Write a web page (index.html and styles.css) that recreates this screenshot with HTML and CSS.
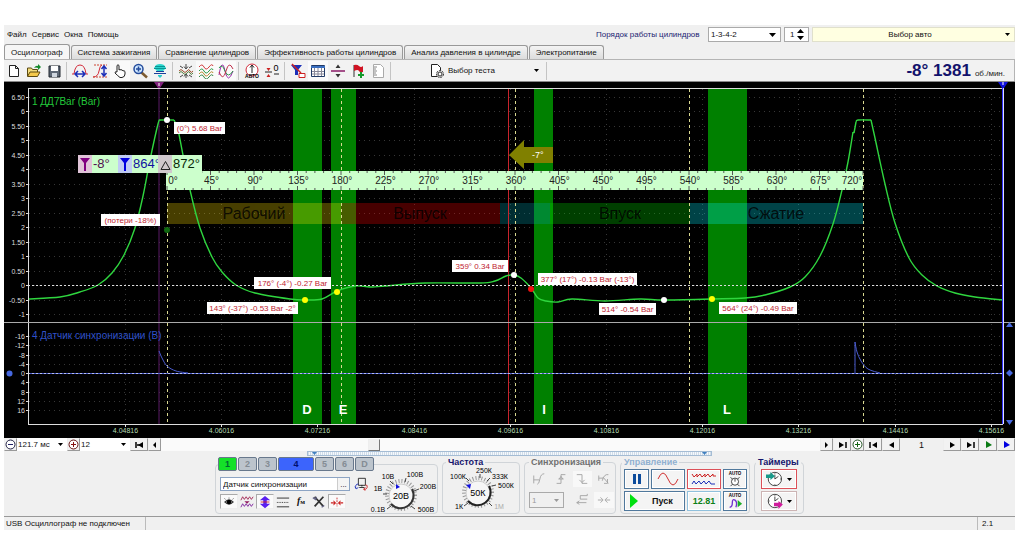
FILE: index.html
```html
<!DOCTYPE html>
<html lang="ru">
<head>
<meta charset="utf-8">
<title>USB Осциллограф</title>
<link rel="stylesheet" href="styles.css">
</head>
<body>
<div class="app">
  <header class="menubar">
    <nav class="menu">
      <button>Файл</button><button>Сервис</button><button>Окна</button><button>Помощь</button>
    </nav>
    <div class="order">
      <label for="order">Порядок работы цилиндров</label>
      <span class="combo order-combo"><select id="order"><option>1-3-4-2</option></select><svg class="caret" viewBox="0 0 7 4"><path d="M0 0h7L3.500 4z"/></svg></span>
      <span class="combo spin"><input type="text" inputmode="numeric" value="1" aria-label="Цилиндр"><svg class="updown" viewBox="0 0 7 11"><path d="M0 4h7L3.500 0zM0 7h7L3.500 11z"/></svg></span>
      <span class="combo car"><select aria-label="Авто"><option>Выбор авто</option></select><svg class="caret small" viewBox="0 0 7 4"><path d="M0 0h7L3.500 4z"/></svg></span>
    </div>
  </header>

  <div class="tabs" role="tablist">
    <button class="tab active" role="tab">Осциллограф</button>
    <button class="tab" role="tab">Система зажигания</button>
    <button class="tab" role="tab">Сравнение цилиндров</button>
    <button class="tab" role="tab">Эффективность работы цилиндров</button>
    <button class="tab" role="tab">Анализ давления в цилиндре</button>
    <button class="tab" role="tab">Электропитание</button>
  </div>

  <div class="toolbar">
    <button class="tool" aria-label="Новый"><svg viewBox="0 0 16 16"><path d="M3.500 2.500h6l3 3v8h-9zM9.500 2.500v3h3" fill="#fff" stroke="#222"/></svg></button>
    <button class="tool" aria-label="Открыть"><svg viewBox="0 0 16 16"><path d="M1.500 13V5h4l1 1.500h5V9" fill="#f3dc7c" stroke="#5c4a10"/><path d="M1.500 13.500L4 9h10l-2.500 4.500z" fill="#f5c94b" stroke="#5c4a10"/><path d="M8 5q2-3 4-2V1l3 3-3 3V5q-2-1-4 0z" fill="#168a2c"/></svg></button>
    <button class="tool" aria-label="Сохранить"><svg viewBox="0 0 16 16"><path d="M3 3h11v11H3z" fill="#5e6876" stroke="#20262e"/><path d="M5 3h7v5H5z" fill="#fff"/><path d="M6 10h5v4H6z" fill="#cfd6df"/></svg></button>
    <i class="sep"></i>
    <button class="tool" aria-label="Период"><svg viewBox="0 0 16 16"><path d="M0 11h2Q3 2 8 2t6 9h2" fill="none" stroke="#d22a3a"/><path d="M3 11h10M6 8l-3 3 3 3M10 8l3 3-3 3" fill="none" stroke="#1b2fb8" stroke-width="1.500"/></svg></button>
    <button class="tool" aria-label="Амплитуда"><svg viewBox="0 0 16 16"><path d="M1 14Q6 14 7 8t3-6" fill="none" stroke="#d22a3a"/><path d="M2 2h13M1 14h14" stroke="#c43" stroke-dasharray="2 1"/><path d="M12 3v10M9.500 6L12 3l2.500 3M9.500 10l2.500 3 2.500-3" fill="none" stroke="#1b2fb8" stroke-width="1.500"/></svg></button>
    <button class="tool on" aria-label="Рука"><svg viewBox="0 0 16 16"><path d="M5 9V2.500q1-1.500 2 0V7q1-1 2 0 1-1 2 1 1-1 2 .5V11q0 3-3 3.500H8Q6 13 3 10q0-2 2-1z" fill="#fff" stroke="#222"/></svg></button>
    <button class="tool" aria-label="Лупа"><svg viewBox="0 0 16 16"><path d="M9.500 9.500L15 14.500" stroke="#7c5a30" stroke-width="2.500"/><circle cx="6.500" cy="6" r="4.500" fill="#cde6ff" stroke="#234a9a" stroke-width="1.500"/><path d="M4 6h5M6.500 3.500v5" stroke="#234a9a" stroke-width="1.500"/></svg></button>
    <button class="tool" aria-label="Фильтр"><svg viewBox="0 0 16 16"><path d="M4 2Q8 0 12 2l2 3-3 3H5L2 5z" fill="#2cd4cc"/><path d="M3 3.500h10M2 5.500h12" stroke="#089494"/><path d="M2 10.500h12M4 8.500h8" stroke="#1b3f9a"/><path d="M6 12h4v1l-2 2-2-2z" fill="#2cc8c8"/></svg></button>
    <i class="sep"></i>
    <button class="tool" aria-label="Сжать"><svg viewBox="0 0 16 16" fill="none"><path d="M1 8q2-3 4 0t4 0 3 0 3 0" stroke="#a05030"/><path d="M1 10q2-3 4 0t4 0 3 0 3 0" stroke="#508040"/><path d="M8 1v4M6 3.500L8 6l2-2.500M8 15v-3M6 13.500L8 11l2 2.500M2 3l3 2M14 3l-3 2M2 14l3-2M14 14l-3-2" stroke="#444"/></svg></button>
    <button class="tool on" aria-label="Раздельно"><svg viewBox="0 0 16 16" fill="none"><path d="M1 4q3-4 5 0t5 0 4-1" stroke="#d03b3b"/><path d="M1 8q3-4 5 0t5 0 4-1" stroke="#2a9a48"/><path d="M1 11q3-4 5 0t5 0 4-1" stroke="#b98932"/><path d="M1 14q3-4 5 0t5 0 4-1" stroke="#348848"/></svg></button>
    <button class="tool on" aria-label="Вместе"><svg viewBox="0 0 16 16" fill="none"><path d="M1 12Q4-6 7 8t8 0" stroke="#9b2bab"/><path d="M1 5q3-5 6 3t8 0" stroke="#2a9a48"/><path d="M1 9q4 10 7-1t7-2" stroke="#c0304c"/></svg></button>
    <i class="sep"></i>
    <button class="tool" aria-label="Авто"><svg viewBox="0 0 16 16"><circle cx="8" cy="7" r="6" fill="#fff" stroke="#d22a3a"/><path d="M8 2v8M6 4.500L8 2l2 2.500" fill="none" stroke="#222"/><text x="8" y="15" class="tiny">АВТО</text></svg></button>
    <button class="tool" aria-label="Ноль"><svg viewBox="0 0 16 16"><path d="M1 9h7M10 11h5" stroke="#222"/><path d="M2.500 5h4l-2 3zM2.500 14h4l-2-3z" fill="#c22"/><text x="12" y="8" class="zero">0</text></svg></button>
    <i class="sep"></i>
    <button class="tool" aria-label="Маркер"><svg viewBox="0 0 16 16"><path d="M1 2h11L8 7v5H5V7z" fill="#1b2fb8"/><path d="M2 1l9 9" stroke="#c22" stroke-width="1.500"/><path d="M9 10.500h6v4H9z" fill="#fff" stroke="#c22"/></svg></button>
    <button class="tool on" aria-label="Таблица"><svg viewBox="0 0 16 16"><path d="M1.500 2.500h13v11h-13z" fill="#fff" stroke="#223a66"/><path d="M1 4h14" stroke="#3a6fc0" stroke-width="2"/><path d="M4.500 5v8M8 5v8M11.500 5v8M2 8.500h12M2 11h12" stroke="#889"/></svg></button>
    <button class="tool" aria-label="Линия"><svg viewBox="0 0 16 16"><path d="M1 8h14" stroke="#8a1a66" stroke-width="1.500"/><path d="M5.500 5h5L8 1.500zM5.500 11h5L8 14.500z" fill="#333"/></svg></button>
    <button class="tool" aria-label="Флаг"><svg viewBox="0 0 16 16"><path d="M4 2v12" stroke="#333"/><path d="M4 2q3-1 5 1t4 0v6q-3 1-4-1t-5 0z" fill="#d01424"/><path d="M11 9v6M8 12h6" stroke="#159a2c" stroke-width="2"/></svg></button>
    <button class="tool" aria-label="Отчет"><svg viewBox="0 0 16 16"><path d="M3.500 1.500h7l3 3v10h-10z" fill="#fff" stroke="#aaa"/><path d="M4 4h3M4 6h2M4 8h3M4 10h2M4 12h3" stroke="#888"/></svg></button>
    <i class="sep"></i>
    <button class="test-select">
      <svg class="doc" viewBox="0 0 16 16"><path d="M2.500 1.500h6l3 3v9h-9z" fill="#fff" stroke="#222"/><circle cx="11" cy="11" r="3.500" fill="#ddd" stroke="#333" stroke-dasharray="2 1"/><circle cx="11" cy="11" r="2" fill="#fff" stroke="#333"/></svg>
      <span>Выбор теста</span>
      <svg class="caret small" viewBox="0 0 7 4"><path d="M0 0h7L3.500 4z"/></svg>
    </button>
    <i class="sep"></i>
    <output class="rpm"><b>-8° 1381</b><span>об./мин.</span></output>
  </div>

  <svg class="plot" viewBox="4 81 1011 357" role="img" aria-label="Осциллограмма">
    <rect x="4" y="81" width="1011" height="357" fill="#000"/>
    <path d="M4 81.500h1011" stroke="#888"/>
    <g id="grid"></g>
    <g fill="#008000">
      <rect x="293" y="89" width="29" height="335"/><rect x="331" y="89" width="25" height="335"/>
      <rect x="534" y="89" width="19" height="335"/><rect x="708" y="89" width="39" height="335"/>
    </g>
    <g class="phase-bars">
      <rect x="167" y="203" width="174" height="21" fill="#ffe000"/>
      <rect x="341" y="203" width="159" height="21" fill="#ff0000"/>
      <rect x="500" y="203" width="50" height="21" fill="#00a0b0"/>
      <rect x="550" y="203" width="140" height="21" fill="#00e000"/>
      <rect x="690" y="203" width="173" height="21" fill="#00f0ff"/>
    </g>
    <g class="phase">
      <text x="254" y="219">Рабочий</text><text x="420" y="219">Выпуск</text>
      <text x="620" y="219">Впуск</text><text x="776" y="219">Сжатие</text>
    </g>
    <g stroke="#d8d890" stroke-dasharray="3 3">
      <path d="M167.500 89V424"/><path d="M341.500 89V424"/><path d="M515.500 89V424"/><path d="M689.500 89V424"/><path d="M863.500 89V424"/>
    </g>
    <path d="M508.500 89V424" stroke="#c8242c"/>
    <path d="M159 89V424" stroke="#5a1a66"/>
    <g id="traces"></g>
    <path d="M28 285.500H1003" stroke="#ddd" stroke-dasharray="2 2"/><path d="M28 373.500H1003" stroke="#b8c0f0" stroke-dasharray="2 2"/>
    <path d="M28.500 89V424" stroke="#ddd"/><path d="M28 88.500H1003M28 424.500H1003" stroke="#ddd"/><path d="M4 322.500H1015" stroke="#aaa"/>
    <path d="M1002.500 88V424" stroke="#3030ff"/><path d="M1003.500 88V424" stroke="#ddf"/>
    <g id="axes"></g>
    <text x="32" y="105" class="channel" fill="#22c83a">1 ДД7Bar (Bar)</text>
    <text x="32" y="339" class="channel" fill="#2f50c8">4 Датчик синхронизации (В)</text>
    <path d="M509 155l15-15v7h29v16h-29v6z" fill="#808000"/>
    <text x="532" y="158" class="shift">-7°</text>
    <g class="band"><text x="307" y="414">D</text><text x="343" y="414">E</text><text x="544" y="414">I</text><text x="727" y="414">L</text></g>
    <rect x="166" y="171" width="697" height="19" fill="#ccffcc"/>
    <g id="ruler"></g>
    <g class="cursors">
      <rect x="78" y="155" width="124" height="18" fill="#ccffcc"/>
      <rect x="78" y="155" width="14" height="18" fill="#e0c4d8"/><rect x="118" y="155" width="14" height="18" fill="#c0ccf4"/>
      <path d="M80 158h10l-4 5v8h-2v-8z" fill="#800080"/><path d="M120 158h10l-4 5v8h-2v-8z" fill="#0000e0"/>
      <text x="93" y="168" fill="#501050">-8°</text><text x="133" y="168" fill="#1010a0">864°</text><text x="173" y="168" fill="#082808">872°</text>
      <rect x="158" y="155" width="14" height="18" fill="#d0c8cc"/><path d="M161 169.500l4.500-8 4.500 8z" fill="none" stroke="#222"/>
    </g>
    <g id="notes"></g>
    <path d="M154 82h10l-4 6h-2z" fill="#80207c"/><path d="M159 83v3" stroke="#fff"/>
    <path d="M998 82h10l-4 6h-2z" fill="#1010e0"/><path d="M1003 82v3" stroke="#fff"/>
    <g fill="#4668e0"><circle cx="9.500" cy="373.500" r="3"/><path d="M1006 327h7l-3.500-5zM1006 420h7l-3.500 5zM1006 373l3.500-3.500 3.500 3.500-3.500 3.500z"/></g>
  </svg>

  <div class="navbar">
    <button class="nav" aria-label="Уменьшить"><svg viewBox="0 0 11 11"><circle cx="5.500" cy="5.500" r="4.500" fill="#fff" stroke="#224"/><path d="M3 5.500h5" stroke="#226"/></svg></button>
    <span class="pick"><select aria-label="Развертка"><option>121.7 мс</option></select><svg class="caret small" viewBox="0 0 7 4"><path d="M0 0h7L3.500 4z"/></svg></span>
    <button class="nav" aria-label="Увеличить"><svg viewBox="0 0 11 11"><circle cx="5.500" cy="5.500" r="4.500" fill="#fff" stroke="#611"/><path d="M3 5.500h5M5.500 3v5" stroke="#811"/></svg></button>
    <span class="pick"><select aria-label="Делений"><option>12</option></select><svg class="caret small" viewBox="0 0 7 4"><path d="M0 0h7L3.500 4z"/></svg></span>
    <button class="nav wide" aria-label="В начало"><svg viewBox="0 0 11 11"><path d="M2 3v6M3 6h3" stroke="#000" stroke-width="1.500"/><path d="M9 3v6L4 6z"/></svg></button>
    <button class="nav" aria-label="Назад"><svg viewBox="0 0 11 11"><path d="M7 3v6L4 6z"/></svg></button>
    <input class="scroll" type="range" min="0" max="100" value="32" aria-label="Прокрутка">
    <button class="nav" aria-label="Вперед"><svg viewBox="0 0 11 11"><path d="M4 3v6l3-3z"/></svg></button>
    <button class="nav wide" aria-label="В конец"><svg viewBox="0 0 11 11"><path d="M9 3v6" stroke="#000" stroke-width="1.500"/><path d="M2 3v6l5-3z"/></svg></button>
    <button class="nav" aria-label="Добавить кадр"><svg viewBox="0 0 11 11"><circle cx="5.500" cy="5.500" r="4.500" fill="#fff" stroke="#252"/><path d="M3 5.500h5M5.500 3v5" stroke="#161"/></svg></button>
    <button class="nav wide" aria-label="Первый кадр"><svg viewBox="0 0 11 11"><path d="M2 3v6" stroke="#000" stroke-width="1.500"/><path d="M9 3v6L4 6z"/></svg></button>
    <button class="nav wide" aria-label="Предыдущий кадр"><svg viewBox="0 0 11 11"><path d="M8 3v6L3 6z"/></svg></button>
    <output class="frame">1</output>
    <button class="nav wide" aria-label="Следующий кадр"><svg viewBox="0 0 11 11"><path d="M3 3v6l5-3z"/></svg></button>
    <button class="nav wide" aria-label="Последний кадр"><svg viewBox="0 0 11 11"><path d="M9 3v6" stroke="#000" stroke-width="1.500"/><path d="M2 3v6l5-3z"/></svg></button>
    <button class="nav wide" aria-label="Воспроизвести"><svg viewBox="0 0 11 11"><path d="M3 2v7l6-3z" fill="#0a7a14"/></svg></button>
    <button class="nav wide" aria-label="Воспроизвести все"><svg viewBox="0 0 11 11"><path d="M3 2v7l6-3z" fill="#0000e0"/></svg></button>
  </div>

  <div class="splitter"><i><svg viewBox="0 0 7 4"><path d="M1 0h5L3.500 3z"/></svg><svg viewBox="0 0 7 4"><path d="M1 0h5L3.500 3z"/></svg></i></div>

  <div class="panels">
    <fieldset class="group channels">
      <legend class="chan-tabs"><button class="chan green">1</button><button class="chan">2</button><button class="chan">3</button><button class="chan blue">4</button><button class="chan">5</button><button class="chan">6</button><button class="chan">D</button></legend>
      <div class="chan-side">
        <div class="name-row">
          <span class="name"><input value="Датчик синхронизации" aria-label="Имя канала"><button aria-label="Выбрать датчик">...</button></span>
          <svg class="swap" viewBox="0 0 16 16" fill="none"><path d="M5 1.500h8v8H5zM9 9v2M6 12h6" stroke="#222"/><path d="M5 8Q1 8 2 13M1 11l1.500 2.500L5 12" stroke="#1b2fb8"/><path d="M13 9q3 0 2 3t-4 2M13 12l-2 2 2 1.500" stroke="#c22"/></svg>
        </div>
        <div class="opt-row">
          <button class="opt on" aria-label="Показать"><svg viewBox="0 0 16 16"><path d="M3 8q5-5 10 0-5 5-10 0z" fill="#777" stroke="#222"/><circle cx="8" cy="8" r="2.500"/><path d="M4 5l-1-1M8 4V3M12 5l1-1" stroke="#333"/></svg></button>
          <button class="opt" aria-label="Инверсия"><svg viewBox="0 0 16 16" fill="none"><path d="M1 6l2-4 2 3 2-3 2 3 2-3 2 3 2-3" stroke="#a02050"/><path d="M1 14l2-4 2 3 2-3 2 3 2-3 2 3 2-3" stroke="#7a1c9a"/><path d="M5 7h6L8 10z" fill="#901c60"/></svg></button>
          <button class="opt on" aria-label="Сдвиг"><svg viewBox="0 0 16 16"><path d="M8 1l6 5h-4v4h4l-6 5-6-5h4V6H2z" fill="#5a20f0"/><path d="M3 8h10" stroke="#c22"/></svg></button>
          <button class="opt" aria-label="Линии"><svg viewBox="0 0 16 16"><path d="M1 3.500h14M1 13.500h14" stroke="#222"/><path d="M1 8.500h14" stroke="#222" stroke-dasharray="1 1"/></svg></button>
          <button class="opt formula" aria-label="Формула"><em>f</em><small>м</small></button>
          <button class="opt" aria-label="Настройка"><svg viewBox="0 0 16 16"><path d="M3 2l10 11M13 2L3 13" stroke="#333" stroke-width="2"/><path d="M1 3l3 2 1-3M11 14l3-2" stroke="#668" stroke-width="1.500" fill="none"/></svg></button>
          <button class="opt on" aria-label="Центр"><svg viewBox="0 0 16 16"><path d="M1 9h3M12 9h3" stroke="#c22" stroke-width="1.500"/><path d="M4 6v6l3-3zM12 6v6L9 9z" fill="#c22"/><path d="M8 3v10" stroke="#c22" stroke-dasharray="2 1"/></svg></button>
        </div>
      </div>
      <svg class="knob volts" viewBox="0 0 65 46">
        <circle cx="33" cy="24" r="14" fill="none" stroke="#999" stroke-width="4" stroke-dasharray="1 2"/>
        <circle cx="33" cy="25" r="12" fill="#f6f6f6" stroke="#ccc"/><path d="M23 33a13 13 0 0 0 21-15" fill="none" stroke="#333" stroke-width="2"/>
        <path d="M28 13v5l4-2z" fill="#1111dd"/><path d="M22 10l3 3M38 7l-1 4M15 23h4M19 38l4-3M46 20l5-2M47 38l-4-3" stroke="#444"/>
        <text x="33" y="28" class="val">20В</text>
        <text x="20" y="8">10В</text><text x="47" y="6">100В</text><text x="10" y="20">1В</text><text x="60" y="18">200В</text><text x="10" y="41">0.1В</text><text x="58" y="41">500В</text>
      </svg>
    </fieldset>

    <fieldset class="group freq">
      <legend>Частота</legend>
      <svg class="knob" viewBox="0 0 76 45">
        <circle cx="35" cy="24" r="14" fill="none" stroke="#999" stroke-width="4" stroke-dasharray="1 2"/>
        <circle cx="35" cy="25" r="12" fill="#f6f6f6" stroke="#ccc"/><path d="M25 33a13 13 0 0 0 21-15" fill="none" stroke="#222" stroke-width="2"/>
        <path d="M23 17l5-1-1 5z" fill="#1111dd"/><path d="M23 10l3 3M37 6v4M44 13l3-3M49 18l4-1M21 38l4-3M49 38l-3-3" stroke="#444"/>
        <text x="35" y="28" class="val">50К</text>
        <text x="41" y="5">250К</text><text x="15" y="11">100К</text><text x="57" y="11">333К</text><text x="63" y="20">500К</text><text x="16" y="41">1К</text><text x="56" y="41" fill="#aaa">1М</text>
      </svg>
    </fieldset>

    <fieldset class="group sync">
      <legend>Синхронизация</legend>
      <button aria-label="Фронт"><svg viewBox="0 0 16 16"><path d="M2 4v9M2 9h6M6 14q2 0 3-6t5-6"/></svg></button>
      <button aria-label="Нарастание"><svg viewBox="0 0 16 16"><path d="M3 13h5V3h5M5 8h6M8 5L6 8M8 5l2 3"/></svg></button>
      <button class="lit" aria-label="Спад"><svg viewBox="0 0 16 16"><path d="M2 3h6v10h6M5 9l3 3 3-3"/></svg></button>
      <button aria-label="Окно"><svg viewBox="0 0 16 16"><path d="M2 4v6M2 7h5M6 10q2-8 7-7M7 6l6 7M12 8v5H8"/></svg></button>
      <span class="combo trig"><select disabled aria-label="Канал синхронизации"><option>1</option></select><svg class="caret small" viewBox="0 0 7 4"><path d="M0 0h7L3.500 4z"/></svg></span>
      <button aria-label="Уровень"><svg viewBox="0 0 16 16"><path d="M6 3h8M6 3v4h8M2 11h11M5 9l-3 2 3 2M14 1v2"/></svg></button>
      <button class="lit" aria-label="Сжать"><svg viewBox="0 0 16 16"><path d="M1 8h5M15 8h-5M4 5l3 3-3 3M12 5L9 8l3 3"/></svg></button>
    </fieldset>

    <fieldset class="group control">
      <legend>Управление</legend>
      <button class="ctl" aria-label="Пауза"><svg viewBox="0 0 16 16"><path d="M4 3h3v10H4zM9 3h3v10H9z" fill="#0d4c9c"/></svg></button>
      <button class="ctl" aria-label="Синус"><svg viewBox="0 0 24 16"><path d="M2 8Q7-4 12 8t10 0" fill="none" stroke="#d03030"/></svg></button>
      <button class="ctl red" aria-label="Поток"><svg viewBox="0 0 28 16"><path d="M2 3l2 3 3-3v3l3-3 2 3 3-3v3l3-3 2 3 3-3v2h3" fill="none" stroke="#c22"/><path d="M2 13l2-3 2 3 3-3 2 3 3-3 2 3 3-3 2 3h4" fill="none" stroke="#1b2fb8"/></svg></button>
      <button class="ctl" aria-label="Автоизмерение"><svg viewBox="0 0 18 18"><text x="9" y="5" class="auto">AUTO</text><circle cx="9" cy="12" r="4" fill="#fff" stroke="#333"/><path d="M9 12V9M4 7l2 2M14 7l-2 2M4 17l2-2M14 17l-2-2" stroke="#333"/></svg></button>
      <button class="ctl start"><svg viewBox="0 0 8 14"><path d="M0 0v14l8-7z" fill="#00e010"/></svg><b>Пуск</b></button>
      <output class="ctl rate">12.81</output>
      <button class="ctl" aria-label="Автозапуск"><svg viewBox="0 0 18 18"><text x="9" y="5" class="auto">AUTO</text><path d="M3 16q3 0 3-5t3-3 1 8" fill="none" stroke="#7030d0" stroke-width="1.500"/><path d="M12 8v8l5-4z" fill="#1cae28"/></svg></button>
    </fieldset>

    <fieldset class="group timers">
      <legend>Таймеры</legend>
      <button class="ctl red" aria-label="Таймер запуска"><svg viewBox="0 0 20 18"><circle cx="10" cy="9" r="7.500" fill="#fff" stroke="#333"/><path d="M10 9V4M10 9l4-3M10 2v1M10 15v1M16 9h1" stroke="#333" fill="none"/><path d="M0 4h5V1l5 5-5 4V8H0z" fill="#189a8a"/></svg><svg class="caret" viewBox="0 0 7 4"><path d="M0 0h7L3.500 4z"/></svg></button>
      <button class="ctl soft" aria-label="Таймер остановки"><svg viewBox="0 0 20 18"><circle cx="10" cy="9" r="7.500" fill="#fff" stroke="#333"/><path d="M10 9V4M10 9l4-3M10 2v1M3 9h1" stroke="#333" fill="none"/><path d="M9 11h5V9l5 4-5 5v-3H9z" fill="#d01c9c"/></svg><svg class="caret" viewBox="0 0 7 4"><path d="M0 0h7L3.500 4z"/></svg></button>
    </fieldset>
  </div>

  <footer class="status"><span class="state">USB Осциллограф не подключен</span><span class="version">2.1</span></footer>
</div>
<script src="plot.js"></script>
</body>
</html>
```

FILE: styles.css
```css
* { box-sizing: border-box; }
body {
  margin: 0;
  padding: 25px 9px 4px 4px;
  background: #fff;
  color: #111;
  font: 8px/11px "Liberation Sans", Arial, sans-serif;
}
button, input, select, output { font: inherit; color: inherit; }
button { padding: 0; border: 0; background: none; }
svg { display: block; }
.app { background: #f0f0f0; }

.menubar { display: flex; justify-content: space-between; height: 19px; }
.menu { display: flex; gap: 5px; padding-left: 3px; align-items: center; }
.order { display: flex; flex: 0 0 419px; gap: 3px; height: 17px; padding-top: 2px; align-items: stretch; }
.order label { flex: 1; color: #1c1c70; line-height: 15px; white-space: nowrap; }
.combo { display: flex; align-items: center; background: #fff; border: 1px solid #aaa; padding: 0 4px 0 2px; }
.combo select, .combo input { flex: 1; min-width: 0; width: 100%; border: 0; padding: 0; background: none; appearance: none; outline: 0; }
.order-combo { width: 73px; }
.spin { width: 25px; padding-left: 5px; }
.car { width: 203px; background: #ffffe1; border-color: #e0e0cc; }
.car select { text-align: center; text-align-last: center; }
.caret { flex: none; width: 7px; height: 4px; }
.caret.small { width: 5px; height: 3px; }
.updown { flex: none; width: 7px; height: 11px; }

.tabs { display: flex; gap: 1px; height: 15px; align-items: flex-end; }
.tab {
  height: 14px;
  padding: 0 6px;
  border: 1px solid #999;
  border-bottom: 0;
  border-radius: 3px 3px 0 0;
  background: linear-gradient(#f4f4f4, #dcdcdc);
  white-space: nowrap;
}
.tab.active { height: 15px; background: #f6f6f6; }

.toolbar { display: flex; align-items: center; height: 22px; border: 1px solid #b4b4b4; border-width: 1px 1px 0 0; background: #f2f2f2; }
.tool { display: grid; place-items: center; width: 20px; height: 20px; }
.tool svg { width: 16px; height: 16px; }
.tool.on { background: #fafafa; }
.sep { width: 1px; height: 18px; margin: 0 3px 0 2px; background: #c4c4c4; }
.tiny { font-size: 5px; font-weight: bold; text-anchor: middle; }
.zero { font-size: 9px; text-anchor: middle; }
.test-select { display: flex; align-items: center; gap: 3px; width: 150px; height: 20px; padding: 0 5px 0 35px; }
.test-select .doc { width: 16px; height: 16px; }
.test-select .caret { margin-left: auto; }
.rpm { display: flex; align-items: baseline; gap: 4px; margin-left: auto; padding-right: 9px; color: #12126c; }
.rpm b { font-size: 17px; line-height: 20px; }
.rpm span { color: #222; }

.plot { width: 100%; height: auto; background: #000; }
.phase-bars { opacity: .28; }
.phase { font-size: 16px; text-anchor: middle; fill: #000; fill-opacity: .8; }
.channel { font-size: 10px; }
.shift { font-size: 9px; fill: #fff; }
.band { font-size: 13px; font-weight: bold; text-anchor: middle; fill: #fff; }
.cursors text { font-size: 13px; }
.axis { font-size: 7px; fill: #ddd; text-anchor: end; }
.axis.time { fill: #b4dcb4; text-anchor: middle; }
.deg { font-size: 10px; fill: #222; text-anchor: middle; }
.note { font-size: 8px; fill: #c01c30; text-anchor: middle; }

.navbar { display: flex; height: 13px; background: #fafafa; }
.nav { display: grid; place-items: center; width: 13px; background: #f2f2f2; border: 1px solid #999; border-color: #eee #999 #999 #eee; }
.nav.wide { width: 18px; }
.nav svg { width: 11px; height: 11px; }
.pick { display: flex; align-items: center; width: 50px; padding: 0 4px 0 1px; background: #fff; }
.pick select { flex: 1; min-width: 0; padding: 0; border: 0; appearance: none; background: none; }
.scroll { flex: 1; min-width: 0; height: 13px; margin: 0; appearance: none; background: #fafafa; }
.scroll::-webkit-slider-thumb { appearance: none; width: 12px; height: 12px; background: #f0f0f0; border: 1px solid #999; border-color: #eee #777 #777 #eee; }
.frame { width: 43px; text-align: center; background: #f0f0f0; font-size: 9px; line-height: 14px; }

.splitter { display: flex; justify-content: center; height: 6px; }
.splitter i { display: flex; justify-content: space-between; width: 40%; height: 5px; padding: 0 3px; border: 1px solid #a4bcd4; background: repeating-linear-gradient(90deg, #d0dce8 0 1px, #f4f8fc 1px 2px); }
.splitter svg { width: 7px; height: 4px; fill: #4080c0; }

.panels { display: flex; justify-content: center; gap: 4px; height: 59px; padding-bottom: 2px; }
.group { min-width: 0; margin: 0; padding: 0; border: 1px solid #d0d4d8; border-radius: 4px; }
.group legend { margin-left: 3px; padding: 0 2px; font-size: 9px; font-weight: bold; line-height: 11px; color: #14146c; }
.group.channels { display: flex; width: 223px; }
.group .chan-tabs { display: flex; gap: 1px; padding: 0; margin-left: 2px; }
.chan { width: 19px; height: 14px; border: 1px solid #68788c; border-radius: 2px; background: #bcc4cc; color: #848c94; font-size: 9px; }
.chan.green { background: #14e028; color: #063; }
.chan.blue { width: 36px; background: #3c64fc; color: #001070; font-weight: bold; }
.chan-side { display: flex; flex-direction: column; gap: 3px; width: 152px; padding: 6px 0 0 4px; }
.name-row { display: flex; gap: 4px; align-items: center; }
.name { display: flex; width: 130px; height: 14px; background: #fff; border: 1px solid #8ca4c4; }
.name input { flex: 1; min-width: 0; padding: 0 2px; border: 0; background: none; }
.name button { width: 12px; line-height: 5px; background: #f4f4f4; border-left: 1px solid #ccc; }
.swap { width: 14px; height: 14px; }
.opt-row { display: flex; }
.opt { display: grid; place-items: center; width: 18px; height: 15px; border: 1px solid transparent; }
.opt.on { background: #fafafa; border-color: #aaa #eee #eee #aaa; }
.opt svg { width: 14px; height: 14px; }
.opt.formula { display: block; font: bold 10px/12px "Liberation Serif", serif; }
.opt.formula small { font-size: 7px; }
.knob { flex: none; overflow: visible; }
.knob text { font-size: 7px; text-anchor: middle; }
.knob .val { font-size: 9px; }
.volts { width: 65px; height: 46px; }
.freq { width: 78px; }
.freq .knob { width: 76px; height: 45px; }

.sync { display: grid; grid-template-columns: repeat(4, 1fr); grid-template-rows: 16px 16px; gap: 5px 2px; width: 92px; padding: 3px 1px 0 4px; }
.sync legend { color: #707070; margin-left: 0; }
.sync button { display: grid; place-items: center; }
.sync button svg { width: 14px; height: 14px; fill: none; stroke: #a0a0a0; }
.sync .lit { background: #f8f8f8; }
.trig { grid-column: span 2; background: #f0f0f0; width: 35px; color: #777; }
.trig .caret { fill: #999; }

.control { display: grid; grid-template-columns: 25px 34px 34px 24px; grid-template-rows: 20px 20px; gap: 2px; width: 130px; padding: 1px 3px; }
.control legend { color: #90b0d0; margin-left: -2px; }
.ctl { display: flex; align-items: center; justify-content: center; border: 1px solid #50789c; background: #f4f4f4; box-shadow: inset 0 0 0 1px #fff; }
.ctl svg { height: 16px; width: auto; }
.ctl.red { border-color: #dc5058; }
.ctl.soft { border-color: #ccb4b4; }
.ctl.start { grid-column: span 2; gap: 14px; padding-right: 6px; font-size: 9px; }
.ctl.start svg { height: 14px; width: 8px; }
.ctl.rate { border-color: #90c0dc; color: #0c8018; font-size: 9px; font-weight: bold; }
.auto { font-size: 5px; font-weight: bold; text-anchor: middle; }
.timers { display: grid; grid-template-rows: 20px 20px; grid-template-columns: 36px; justify-content: center; gap: 2px; width: 50px; padding: 1px 0; }
.group.timers legend { margin-left: 1px; }
.timers .ctl { gap: 4px; }
.timers .ctl .caret { width: 5px; height: 3px; }

.status { display: flex; justify-content: space-between; height: 14px; border-top: 1px solid #999; line-height: 13px; }
.state { width: 142px; padding-left: 2px; border-right: 1px solid #bbb; white-space: nowrap; }
.version { width: 38px; padding-left: 4px; border-left: 1px solid #bbb; }
```

FILE: plot.js
```js
const NS = 'http://www.w3.org/2000/svg';

function add(parent, tag, attrs, text) {
  const el = document.createElementNS(NS, tag);
  for (const key in attrs) el.setAttribute(key, attrs[key]);
  if (text !== undefined) el.textContent = text;
  document.getElementById(parent).appendChild(el);
}

// Pressure and sync axes
const axes = [
  { zero: 285, step: -14.5, from: -2, to: 13, label: k => k % 2 ? (k / 2).toFixed(2) : String(k / 2) },
  { zero: 373, step: 9.25, from: -4, to: 4, label: k => String(k * 4) }
];
for (const a of axes) {
  for (let k = a.from; k <= a.to; k++) {
    const y = Math.round(a.zero + k * a.step) + 0.5;
    add('grid', 'path', { d: `M29 ${y}H1003`, stroke: '#363636', 'stroke-dasharray': '1 4' });
    add('axes', 'path', { d: `M26 ${y}h3`, stroke: '#ddd' });
    add('axes', 'text', { x: 25, y: y + 2, class: 'axis' }, a.label(k));
  }
}

// Time axis
for (let k = 0; k < 10; k++) {
  const x = Math.round(125 + k * 96.2) + 0.5;
  add('grid', 'path', { d: `M${x} 89V424`, stroke: '#363636', 'stroke-dasharray': '1 4' });
  add('axes', 'path', { d: `M${x} 424v3`, stroke: '#ddd' });
  add('axes', 'text', { x: x, y: 433, class: 'axis time' }, (4.04816 + k * 0.012).toFixed(5));
}

// Crank angle ruler
for (let k = 0; k <= 80; k++) {
  const x = 167 + k * 8.7;
  const h = k % 5 ? 2 : 4;
  add('ruler', 'path', { d: `M${x} 171v${h}M${x} 190v${-h}`, stroke: '#555' });
  if (k % 5 === 0) {
    const shift = k === 0 ? 6 : k === 80 ? -11 : 1;
    add('ruler', 'text', { x: x + shift, y: 184, class: 'deg' }, k * 9 + '°');
  }
}

// Smooth curve through the sample points
function smooth(p) {
  let d = `M${p[0]}`;
  for (let i = 0; i < p.length - 1; i++) {
    const a = p[i - 1] || p[i], b = p[i], c = p[i + 1], e = p[i + 2] || c;
    d += `C${b[0] + (c[0] - a[0]) / 6} ${b[1] + (c[1] - a[1]) / 6} ${c[0] - (e[0] - b[0]) / 6} ${c[1] - (e[1] - b[1]) / 6} ${c}`;
  }
  return d;
}
const pressure = [
  [[28, 299], [60, 297], [80, 292], [98, 285], [112, 273], [124, 255], [135, 228], [143, 196], [150, 160], [158, 124], [160, 120]],
  [[160, 120], [174, 120]],
  [[174, 120], [178, 130], [183, 155], [190, 190], [200, 228], [212, 257], [222, 272], [236, 285], [255, 293], [290, 299], [305, 300], [322, 299], [337, 291], [355, 286], [372, 287], [385, 286], [425, 283], [480, 283], [495, 281], [506, 276], [514, 275], [521, 278], [531, 288], [538, 298], [546, 301], [558, 302], [572, 299], [605, 301], [640, 299], [664, 300], [712, 299], [745, 298], [765, 295], [790, 287], [805, 277], [820, 256], [833, 224], [842, 190], [848, 162], [853, 132]],
  [[853, 132], [854, 133]],
  [[854, 133], [856, 122]],
  [[856, 122], [858, 120], [871, 120]],
  [[871, 120], [875, 138], [885, 184], [895, 223], [909, 258], [922, 275], [937, 286], [955, 293], [975, 297], [1003, 300]]
];
for (const part of pressure) add('traces', 'path', { d: smooth(part), fill: 'none', stroke: '#2fd63f', 'stroke-width': 1.4 });
const sync = [
  [[28, 373.5], [159, 373.5]],
  [[159, 351], [162, 358], [167, 366], [176, 371], [188, 373]],
  [[159, 373.5], [855, 373.5]],
  [[855, 374], [855, 342]],
  [[855, 342], [857, 352], [861, 361], [868, 369], [880, 373]],
  [[855, 373.5], [1003, 373.5]]
];
for (const part of sync) add('traces', 'path', { d: smooth(part), fill: 'none', stroke: '#4a5cd0' });

// Measurement points and their callouts
const points = [[167, 120, '#fff'], [167, 230, '#106810'], [305, 300, '#ff0'], [337, 292, '#ff0'], [514, 275, '#fff'], [531, 289, '#f01010'], [664, 300, '#fff'], [712, 299, '#ff0']];
for (const [cx, cy, fill] of points) add('notes', 'circle', { cx, cy, r: 3, fill });
const notes = [
  [174, 122, 51, '(0°) 5.68 Bar'], [101, 214, 59, '(потери -18%)'], [254, 277, 77, '176° (-4°) -0.27 Bar'],
  [207, 302, 91, '143° (-37°) -0.53 Bar -2°'], [452, 260, 56, '359° 0.34 Bar'], [538, 273, 99, '377° (17°) -0.13 Bar (-13°)'],
  [599, 303, 57, '514° -0.54 Bar'], [719, 302, 78, '564° (24°) -0.49 Bar']
];
for (const [x, y, width, text] of notes) {
  add('notes', 'rect', { x, y, width, height: 12, fill: '#fff' });
  add('notes', 'text', { x: x + width / 2, y: y + 9, class: 'note' }, text);
}
```
